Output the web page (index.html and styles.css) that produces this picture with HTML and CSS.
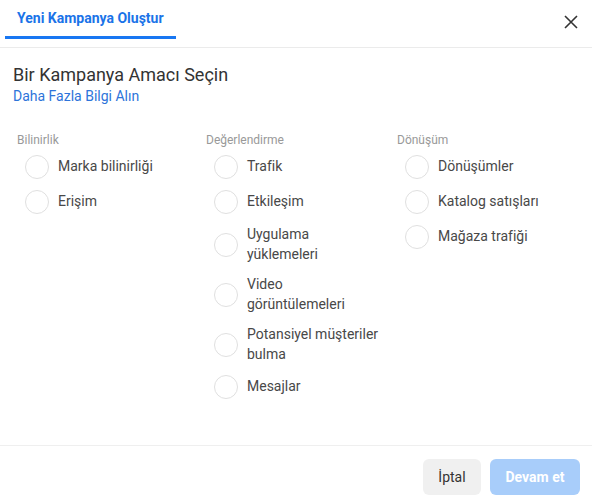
FILE: index.html
```html
<!DOCTYPE html>
<html lang="tr">
<head>
<meta charset="utf-8">
<title>Yeni Kampanya Oluştur</title>
<link rel="stylesheet" href="styles.css">
</head>
<body>
<div class="dialog">
  <header class="header">
    <div class="tab">Yeni Kampanya Oluştur</div>
    <button class="close" aria-label="Kapat">
      <svg width="14" height="14" viewBox="0 0 14 14"><path d="M1 1L13 13M13 1L1 13" stroke="#333" stroke-width="1.6" fill="none"/></svg>
    </button>
  </header>
  <main class="content">
    <h1 class="title">Bir Kampanya Amacı Seçin</h1>
    <a class="learn" href="#">Daha Fazla Bilgi Alın</a>
    <div class="columns">
      <section class="col">
        <div class="cat">Bilinirlik</div>
        <label class="opt"><span class="radio"></span><span class="txt">Marka bilinirliği</span></label>
        <label class="opt"><span class="radio"></span><span class="txt">Erişim</span></label>
      </section>
      <section class="col">
        <div class="cat">Değerlendirme</div>
        <label class="opt"><span class="radio"></span><span class="txt">Trafik</span></label>
        <label class="opt"><span class="radio"></span><span class="txt">Etkileşim</span></label>
        <label class="opt"><span class="radio"></span><span class="txt">Uygulama yüklemeleri</span></label>
        <label class="opt"><span class="radio"></span><span class="txt">Video görüntülemeleri</span></label>
        <label class="opt"><span class="radio"></span><span class="txt">Potansiyel müşteriler bulma</span></label>
        <label class="opt"><span class="radio"></span><span class="txt">Mesajlar</span></label>
      </section>
      <section class="col">
        <div class="cat">Dönüşüm</div>
        <label class="opt"><span class="radio"></span><span class="txt">Dönüşümler</span></label>
        <label class="opt"><span class="radio"></span><span class="txt">Katalog satışları</span></label>
        <label class="opt"><span class="radio"></span><span class="txt">Mağaza trafiği</span></label>
      </section>
    </div>
  </main>
  <footer class="footer">
    <button class="btn btn-cancel">İptal</button>
    <button class="btn btn-primary">Devam et</button>
  </footer>
</div>
</body>
</html>
```
FILE: styles.css
```css
* { box-sizing: border-box; }
html, body { margin: 0; padding: 0; background: #fff; }
body { font-family: Roboto, "Noto Sans", Arial, sans-serif; color: #444; }

.dialog { height: 100vh; display: flex; flex-direction: column; }

.header {
  height: 48px;
  border-bottom: 1px solid #ebebeb;
  display: flex;
  align-items: flex-start;
  justify-content: space-between;
  padding: 0 14px 0 5px;
}
.tab {
  padding: 10px 12px;
  line-height: 16px;
  font-size: 14px;
  font-weight: 700;
  color: #1a73e8;
  border-bottom: 3px solid #1877f2;
  height: 39px;
}
.close {
  margin-top: 15px;
  padding: 0;
  border: 0;
  background: none;
  width: 14px;
  height: 14px;
  display: flex;
}

.content { flex: 1; padding: 15px 13px 0; }
.title {
  margin: 0;
  font-size: 18px;
  font-weight: 400;
  line-height: 23px;
  color: #333;
}
.learn {
  display: block;
  font-size: 14px;
  line-height: 20px;
  color: #2d74da;
  text-decoration: none;
}

.columns {
  display: grid;
  grid-template-columns: 189px 191px 1fr;
  margin-top: 27px;
  padding-left: 4px;
}
.col { display: flex; flex-direction: column; gap: 11px; }
.cat {
  font-size: 12px;
  line-height: 14px;
  color: #999;
  margin-bottom: -3px;
}
.opt {
  display: flex;
  align-items: center;
  gap: 9px;
  padding-left: 8px;
  min-height: 24px;
}
.radio {
  flex: none;
  width: 24px;
  height: 24px;
  border-radius: 50%;
  border: 1px solid #e0e0e0;
  background: #fff;
}
.txt {
  font-size: 14px;
  line-height: 19.5px;
  color: #484848;
  max-width: 133px;
}

.footer {
  border-top: 1px solid #efefef;
  height: 56px;
  display: flex;
  justify-content: flex-end;
  align-items: flex-start;
  gap: 9px;
  padding: 13px 12px 0;
}
.btn {
  height: 36px;
  border: 0;
  border-radius: 6px;
  font-family: Roboto, "Noto Sans", Arial, sans-serif;
  font-size: 14px;
  padding: 0 15px;
}
.btn-cancel { background: #f0f0f0; color: #333; width: 58px; }
.btn-primary { background: #a8cdfa; color: #fff; font-weight: 700; width: 90px; }
```
